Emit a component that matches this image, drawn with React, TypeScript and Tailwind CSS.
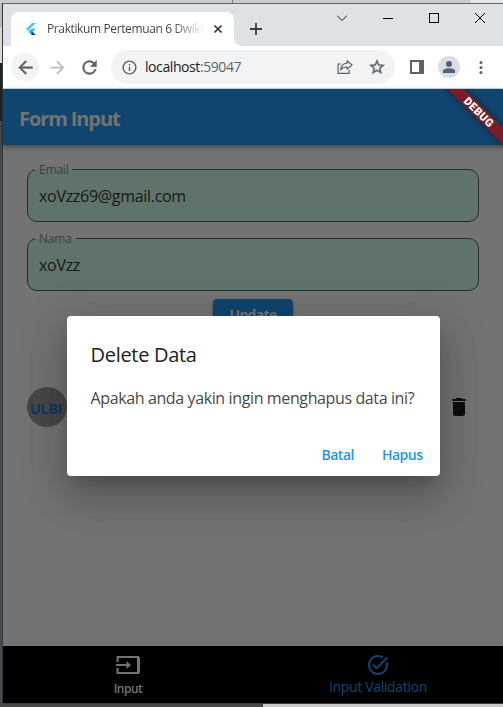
import React from "react";

function TabStrip() {
  return (
    <div className="relative flex h-[42px] shrink-0 bg-[#dee1e6] pl-2 pt-2">
      <div className="flex h-[34px] w-[223px] items-center rounded-t-lg bg-white pl-3.5">
        <svg className="h-3 w-3 shrink-0" viewBox="0 0 12 12">
          <path d="M7 0h4L3 8 1 6z" fill="#54c5f8" />
          <path d="M7 5.5h4L7.5 9 5.5 7z" fill="#42b5f5" />
          <path d="M3.8 8.7 5.7 6.8 7.6 8.7 11 12H7z" fill="#01579b" />
          <path d="m3.8 8.7 1.8-1.8 1.9 1.8-1.9 1.8z" fill="#29b6f6" />
        </svg>
        <span className="ml-2.5 w-[160px] shrink-0 whitespace-nowrap bg-gradient-to-r from-[#3c4043] from-78% to-transparent to-98% bg-clip-text text-[12px] tracking-[-0.38px] text-transparent">
          Praktikum Pertemuan 6 Dwiki
        </span>
        <svg className="ml-[7px] h-2 w-2 shrink-0" viewBox="0 0 8 8" stroke="#3c4043" strokeWidth="1.6">
          <path d="M.5.5l7 7M7.5.5l-7 7" />
        </svg>
      </div>
      <svg className="h-[34px] w-2" viewBox="0 0 8 34">
        <path d="M0 26a8 8 0 0 0 8 8H0z" fill="#fff" />
      </svg>
      <svg className="ml-2 mt-[11px] h-3 w-3" viewBox="0 0 12 12" stroke="#3c4043" strokeWidth="1.8">
        <path d="M6 0v12M0 6h12" />
      </svg>
      <svg className="ml-[75px] mt-0.5 h-2 w-[10px]" viewBox="0 0 10 8" stroke="#222" fill="none">
        <path d="M0 1.5l5 5 5-5" />
      </svg>
      <svg className="ml-9 mt-0.5 h-2 w-[10px]" viewBox="0 0 10 8" stroke="#000">
        <path d="M0 4.5h10" />
      </svg>
      <div className="ml-9 mt-[1px] h-[10px] w-[10px] border border-black" />
      <svg className="ml-9 mt-[1px] h-[10px] w-[10px]" viewBox="0 0 10 10" stroke="#000">
        <path d="M0 0l10 10M10 0L0 10" />
      </svg>
    </div>
  );
}

function Toolbar() {
  return (
    <div className="flex h-[42px] shrink-0 items-center bg-white pl-2">
      <div className="flex h-7 w-7 items-center justify-center rounded-full bg-[#f3f3f3]">
        <svg className="h-[21px] w-[21px]" viewBox="0 0 24 24" fill="#5f6368" stroke="#5f6368" strokeWidth="0.5">
          <path d="M20 11H7.83l5.59-5.59L12 4l-8 8 8 8 1.41-1.41L7.83 13H20v-2z" />
        </svg>
      </div>
      <svg className="ml-[7.5px] h-[21px] w-[21px]" viewBox="0 0 24 24" fill="#babcbe">
        <path d="M4 11h12.17l-5.59-5.59L12 4l8 8-8 8-1.41-1.41L16.17 13H4v-2z" />
      </svg>
      <svg className="ml-[11px] h-[21px] w-[21px]" viewBox="0 0 24 24" fill="#5f6368" stroke="#5f6368" strokeWidth="0.5">
        <path d="M17.65 6.35A7.96 7.96 0 0 0 12 4a8 8 0 1 0 7.73 10h-2.08A6 6 0 1 1 12 6c1.66 0 3.14.69 4.22 1.78L13 11h7V4z" />
      </svg>
      <div className="ml-[11.5px] flex h-[34px] w-[284px] items-center rounded-full bg-[#f1f3f4] pl-[9.5px]">
        <svg className="h-[17px] w-[17px]" viewBox="0 0 24 24" fill="#5f6368">
          <path d="M11 7h2v2h-2zm0 4h2v6h-2zm1-9a10 10 0 1 0 0 20 10 10 0 0 0 0-20zm0 18a8 8 0 1 1 0-16 8 8 0 0 1 0 16z" />
        </svg>
        <span className="-mt-px ml-[7.5px] w-[179.5px] text-[14px] tracking-[-0.42px] text-[#202124]">
          localhost<span className="text-[#5f6368]">:59047</span>
        </span>
        <svg className="ml-3 h-4 w-4" viewBox="0 0 16 16" fill="none" stroke="#5f6368" strokeWidth="1.2">
          <path d="M4 5H1.1v9.4h11V11" />
          <path d="M10 1.8 15 6l-5 4.2V8C7 7.900 5 9 3.700 11 4 7.500 6 4.600 10 4.200z" strokeLinejoin="round" />
        </svg>
        <svg className="ml-[15px] h-[18px] w-[18px]" viewBox="0 0 24 24" fill="#5f6368" stroke="#5f6368" strokeWidth="0.6">
          <path d="M22 9.240l-7.190-.62L12 2 9.190 8.630 2 9.240l5.460 4.730L5.820 21 12 17.270 18.180 21l-1.630-7.030L22 9.240zM12 15.400l-3.760 2.270 1-4.280-3.320-2.880 4.380-.38L12 6.100l1.710 4.040 4.380.38-3.320 2.880 1 4.280L12 15.400z" />
        </svg>
      </div>
      <div className="ml-[15px] h-[14px] w-[14px] border-2 border-r-[5px] border-[#5f6368]" />
      <div className="ml-[14px] flex h-[22px] w-[22px] items-center justify-center rounded-full bg-[#dadde3]">
        <svg className="h-3 w-3" viewBox="0 0 12 12" fill="#54607a">
          <circle cx="6" cy="3" r="3" />
          <path d="M0 12V9.800C0 8 3.500 7.200 6 7.200S12 8 12 9.800V12z" />
        </svg>
      </div>
      <svg className="ml-[19px] h-[13px] w-1" viewBox="0 0 4 13" fill="#5f6368">
        <circle cx="2" cy="1.600" r="1.500" />
        <circle cx="2" cy="6.500" r="1.500" />
        <circle cx="2" cy="11.400" r="1.500" />
      </svg>
    </div>
  );
}

function Field({ label, value, notch }: { label: string; value: string; notch: string }) {
  return (
    <div className="relative flex h-[53px] w-[452px] items-center rounded-[10px] border border-[#242e2a] bg-[#5f736b] pl-[11px]">
      <div className={"absolute -top-px left-[7px] h-px bg-[#6a736f] " + notch} />
      <span className="absolute -top-[8px] left-[11px] text-[12px] leading-4 tracking-[-0.2px] text-[#3a423e]">{label}</span>
      <span className="text-[16px] leading-6 tracking-[-0.3px] text-[#141917]">{value}</span>
    </div>
  );
}

function DebugBanner() {
  return (
    <div className="absolute right-0 top-0 h-[60px] w-[60px] overflow-hidden">
      <div className="absolute left-[-14px] top-[17px] flex h-3 w-[100px] rotate-45 items-center justify-center bg-[#771e2a] font-['Roboto'] text-[11px] font-black leading-none tracking-[0.4px] text-white shadow-[0_0_6px_rgba(0,0,0,0.5)]">
        DEBUG
      </div>
    </div>
  );
}

function DeleteDialog() {
  return (
    <div className="absolute left-[63.5px] top-[227px] flex h-40 w-[373px] flex-col rounded bg-white pl-6 pt-6 shadow-[0_11px_15px_-7px_rgba(0,0,0,0.2),0_24px_38px_3px_rgba(0,0,0,0.14),0_9px_46px_8px_rgba(0,0,0,0.12)]">
      <h2 className="mt-px whitespace-nowrap text-[20px] font-medium leading-7 tracking-[-0.3px] text-[#212121]">Delete Data</h2>
      <p className="mt-[17px] whitespace-nowrap text-[16px] leading-6 tracking-[-0.38px] text-[#484848]">
        Apakah anda yakin ingin menghapus data ini?
      </p>
      <div className="mt-[35px] flex justify-end gap-7 pr-[17px] text-[14px] font-semibold leading-5 tracking-[-0.5px] text-[#2196f3]">
        <button>Batal</button>
        <button>Hapus</button>
      </div>
    </div>
  );
}

function BottomNav() {
  return (
    <div className="flex h-[57px] shrink-0 bg-black">
      <div className="flex w-[250px] flex-col items-center pt-[10px]">
        <svg className="h-[18px] w-6" viewBox="0 0 24 18" fill="none" stroke="#737373" strokeWidth="2">
          <path d="M1.500 6V1H22v16H1.500v-5" />
          <path d="M22.500 1v16" strokeWidth="3" />
          <path d="M0 9h12" />
          <path d="M10.500 5l4.500 4-4.500 4z" fill="#737373" stroke="none" />
        </svg>
        <span className="mt-[7px] text-[12px] font-semibold leading-4 tracking-[-0.5px] text-[#737373]">Input</span>
      </div>
      <div className="flex w-[250px] flex-col items-center pt-[7px] text-[#10456f]">
        <svg className="h-6 w-6" viewBox="0 0 24 24" fill="currentColor">
          <path d="M22 5.180 10.590 16.600l-4.240-4.240 1.410-1.410 2.830 2.830 10-10L22 5.180zm-2.210 5.040c.13.570.21 1.170.21 1.780 0 4.420-3.580 8-8 8s-8-3.580-8-8 3.580-8 8-8c1.580 0 3.040.46 4.280 1.250l1.440-1.440A9.900 9.900 0 0 0 12 2C6.480 2 2 6.480 2 12s4.480 10 10 10 10-4.480 10-10c0-1.190-.22-2.330-.6-3.390l-1.610 1.610z" />
        </svg>
        <span className="text-[14px] leading-5 tracking-[-0.34px]">Input Validation</span>
      </div>
    </div>
  );
}

export default function App() {
  return (
    <div className="flex h-[707px] w-[503px] flex-col overflow-hidden bg-[#c9c9c9] font-['Open_Sans','Noto_Sans',sans-serif]">
      <div className="flex h-[3px] shrink-0">
        <div className="w-[232px] bg-[#cbcbcb]" />
        <div className="w-px bg-[#777]" />
        <div className="w-[238px] bg-[#cbcbcb]" />
        <div className="flex-1 bg-[#e8e8e8]" />
      </div>
      <div className="flex h-[701px] shrink-0">
        <div className="flex w-[3px] flex-col border-r border-[#34383b]">
          <div className="h-6 bg-[#bcbcbc]" />
          <div className="h-9 bg-[#d8d8d8]" />
          <div className="h-[58px] bg-[#202427]" />
          <div className="flex-1 bg-[#454a4e]" />
        </div>
        <div className="flex w-[500px] flex-col border-y border-t-[#65676a] border-b-[#3c3c3c]">
          <TabStrip />
          <Toolbar />
          <div className="h-px shrink-0 bg-[#d5d7da]" />
          <div className="relative flex h-[614px] flex-col bg-[#737373]">
            <header className="flex h-14 shrink-0 items-center bg-[#10456f] pl-4 pt-1 shadow-[0_2px_5px_rgba(0,0,0,0.4)]">
              <h1 className="text-[20px] font-bold tracking-[-1.1px] text-[#737373]">Form Input</h1>
            </header>
            <main className="flex flex-1 flex-col px-6 pt-6">
              <Field label="Email" value="xoVzz69@gmail.com" notch="w-[37px]" />
              <div className="h-4" />
              <Field label="Nama" value="xoVzz" notch="w-[41px]" />
              <button className="ml-[186px] mt-2 h-8 w-20 rounded bg-[#10456f] text-[14px] font-bold leading-5 tracking-[-0.7px] text-[#737373] shadow-[0_2px_3px_rgba(0,0,0,0.4)]">
                Update
              </button>
              <div className="mt-14 flex items-center justify-between">
                <div className="flex h-10 w-10 items-center justify-center whitespace-nowrap rounded-full bg-[#474747] pr-[3px] pt-[3px] text-[15px] font-bold tracking-[-0.8px] text-[#103a62]">
                  ULBI
                </div>
                <svg className="mr-2 h-6 w-6" viewBox="0 0 24 24" fill="#0e0e0e">
                  <path d="M6 19c0 1.100.9 2 2 2h8c1.100 0 2-.9 2-2V7H6zM18 4h-2.500l-.7-.7c-.2-.2-.5-.3-.7-.3H9.900c-.2 0-.5.1-.7.3l-.7.7H6a1 1 0 0 0 0 2h12a1 1 0 0 0 0-2z" />
                </svg>
              </div>
            </main>
            <BottomNav />
            <DebugBanner />
            <DeleteDialog />
          </div>
        </div>
      </div>
      <div className="flex h-[3px] shrink-0">
        <div className="w-[263px] bg-[#454a4e]" />
        <div className="flex-1 bg-[#c9c9c9]" />
      </div>
    </div>
  );
}
